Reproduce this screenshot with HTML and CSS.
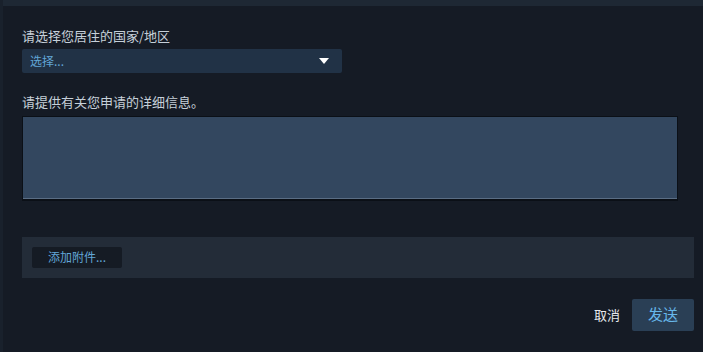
FILE: index.html
```html
<!DOCTYPE html>
<html lang="zh-CN">
<head>
<meta charset="utf-8">
<title>申请</title>
<link rel="stylesheet" href="styles.css">
</head>
<body>
<div class="topbar"></div>
<div class="page">
  <div class="field">
    <div class="label">请选择您居住的国家/地区</div>
    <div class="select">
      <span class="select-text">选择...</span>
      <svg class="arrow" width="10" height="6" viewBox="0 0 10 6"><path d="M0 0 H10 L5 6 Z" fill="#ffffff"/></svg>
    </div>
  </div>
  <div class="field field-details">
    <div class="label">请提供有关您申请的详细信息。</div>
    <textarea class="details"></textarea>
  </div>
  <div class="attach-panel">
    <button class="attach-btn">添加附件...</button>
  </div>
  <div class="footer">
    <span class="cancel">取消</span>
    <button class="send">发送</button>
  </div>
</div>
</body>
</html>
```

FILE: styles.css
```css
html, body {
  margin: 0;
  padding: 0;
  background: #151b25;
  font-family: "Noto Sans CJK SC", "Noto Sans", sans-serif;
}
body {
  width: 703px;
  height: 352px;
  overflow: hidden;
  border-left: 3px solid #19212c;
  box-sizing: border-box;
}
.topbar {
  height: 6px;
  background: #1e2834;
}
.page {
  padding: 21px 9px 0 19px;
  display: flex;
  flex-direction: column;
}
.label {
  font-size: 13px;
  line-height: 18px;
  color: #c6d0d9;
}
.select {
  margin-top: 4px;
  width: 320px;
  height: 24px;
  background: #213246;
  box-sizing: border-box;
  display: flex;
  align-items: center;
  justify-content: space-between;
  padding: 0 13px 0 8px;
  border-radius: 2px;
}
.select-text {
  font-size: 12px;
  color: #62a6d6;
  line-height: 22px;
}
.arrow {
  display: block;
}
.field-details {
  margin-top: 20px;
}
.details {
  display: block;
  margin: 5px 0 0 0;
  width: 656px;
  height: 85px;
  box-sizing: border-box;
  background: #33475f;
  border: 1px solid #0b1017;
  border-bottom-width: 2px;
  box-shadow: inset 0 -1px 0 #5a6d84;
  resize: none;
  outline: none;
  padding: 4px;
}
.attach-panel {
  margin-top: 36px;
  height: 41px;
  box-sizing: border-box;
  background: #232c38;
  padding: 10px;
  display: flex;
  align-items: flex-start;
}
.attach-btn {
  width: 90px;
  height: 21px;
  background: #151b24;
  border: none;
  border-radius: 2px;
  color: #62a6d6;
  font-family: "Noto Sans CJK SC", "Noto Sans", sans-serif;
  font-size: 12px;
  line-height: 19px;
  padding: 0 0 2px 0;
}
.footer {
  margin-top: 21px;
  display: flex;
  justify-content: flex-end;
  align-items: center;
}
.cancel {
  font-size: 13px;
  color: #e6e9ec;
  margin-right: 12px;
  margin-bottom: 2px;
}
.send {
  width: 62px;
  height: 32px;
  background: #2a3f55;
  border: none;
  border-radius: 2px;
  color: #67b7ea;
  font-family: "Noto Sans CJK SC", "Noto Sans", sans-serif;
  font-size: 15px;
  padding: 0 0 3px 0;
}
```
